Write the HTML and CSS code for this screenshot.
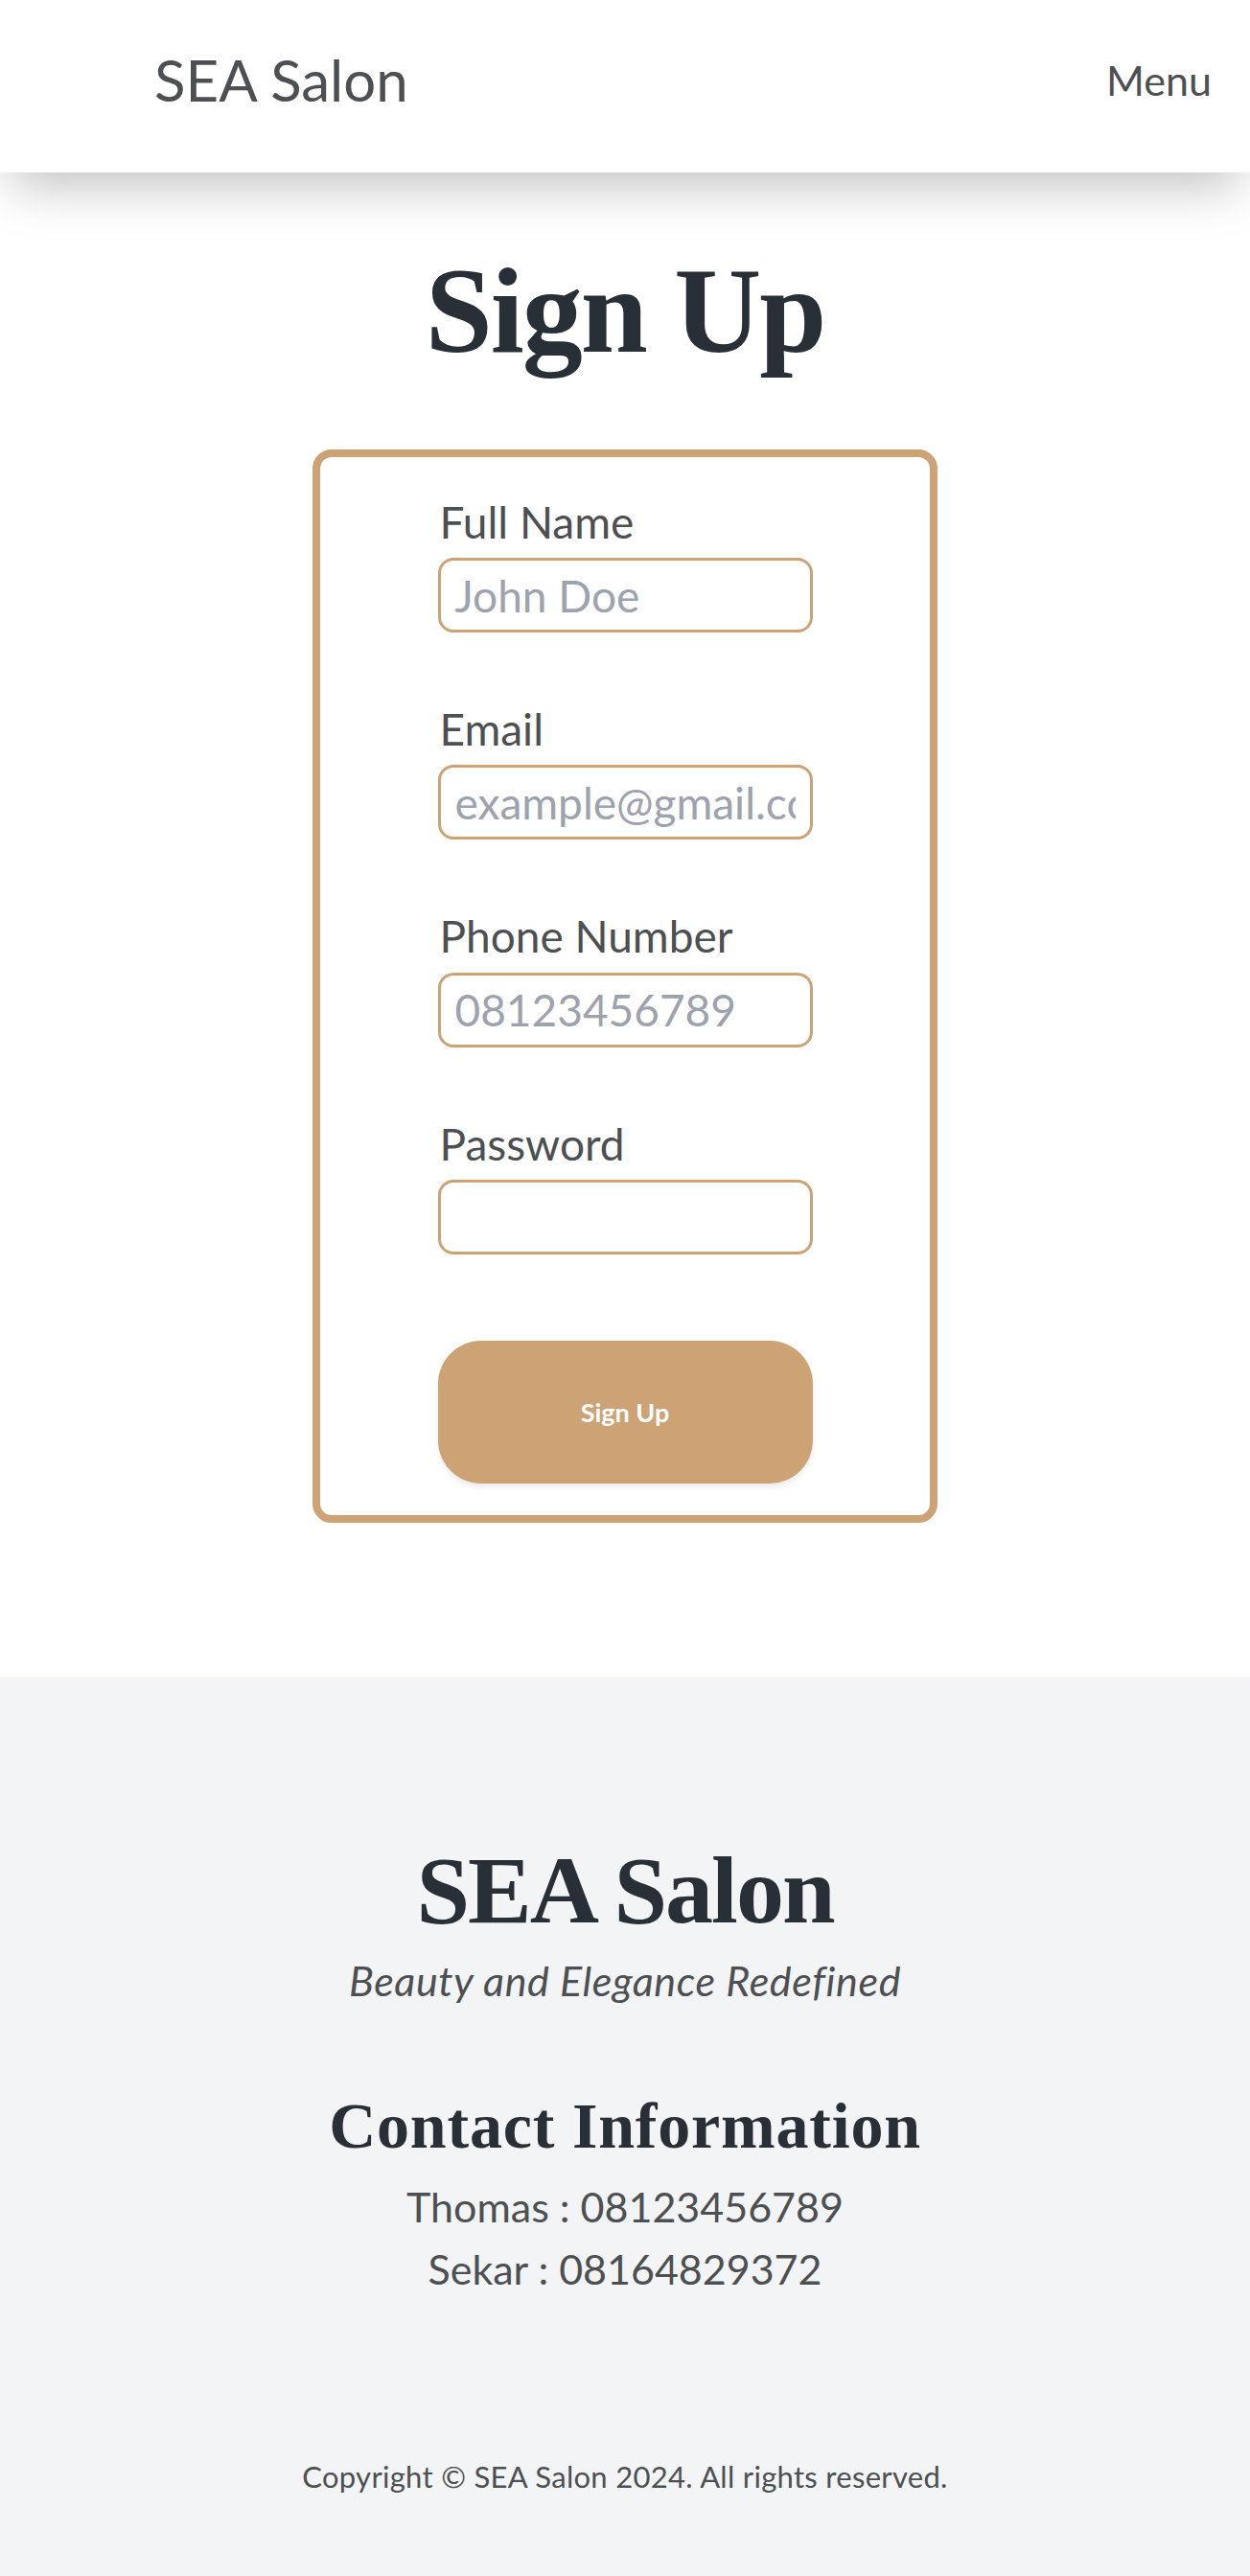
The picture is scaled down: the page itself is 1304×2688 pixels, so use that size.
FILE: index.html
```html
<!DOCTYPE html>
<html lang="en">
<head>
<meta charset="utf-8">
<title>Sign Up - SEA Salon</title>
<link rel="stylesheet" href="styles.css">
</head>
<body>
<header class="site-header">
  <a class="logo" href="#">SEA Salon</a>
  <button class="menu-btn" type="button">Menu</button>
</header>

<main class="page">
  <h1 class="page-title">Sign Up</h1>
  <form class="card">
    <div class="fields">
      <div class="field">
        <label class="field-label" for="name">Full Name</label>
        <input class="field-input" id="name" type="text" placeholder="John Doe">
      </div>
      <div class="field">
        <label class="field-label" for="email">Email</label>
        <input class="field-input" id="email" type="email" placeholder="example@gmail.com">
      </div>
      <div class="field">
        <label class="field-label" for="phone">Phone Number</label>
        <input class="field-input" id="phone" type="tel" placeholder="08123456789">
      </div>
      <div class="field field-last">
        <label class="field-label" for="password">Password</label>
        <input class="field-input" id="password" type="password">
      </div>
      <button class="submit-btn" type="button">Sign Up</button>
    </div>
  </form>
</main>

<footer class="site-footer">
  <h2 class="footer-brand">SEA Salon</h2>
  <p class="footer-tagline">Beauty and Elegance Redefined</p>
  <h3 class="footer-heading">Contact Information</h3>
  <div class="footer-contacts">
    <p class="footer-contact">Thomas : 08123456789</p>
    <p class="footer-contact">Sekar : 08164829372</p>
  </div>
  <p class="footer-copy">Copyright © SEA Salon 2024. All rights reserved.</p>
</footer>
</body>
</html>
```

FILE: styles.css
```css
* { box-sizing: border-box; }

html, body {
  margin: 0;
  padding: 0;
  background: #ffffff;
  font-family: Lato, "Open Sans", sans-serif;
  color: #4D5053;
}

/* Header */
.site-header {
  position: relative;
  z-index: 2;
  height: 180px;
  display: flex;
  align-items: center;
  justify-content: space-between;
  padding: 0 40px 14px 161px;
  background: #ffffff;
  box-shadow: 0 25px 50px -12px rgba(0, 0, 0, 0.25);
}

.logo {
  font-size: 60px;
  line-height: 1;
  color: #4D5053;
  text-decoration: none;
}

.menu-btn {
  border: 0;
  background: transparent;
  padding: 0;
  font-family: inherit;
  font-size: 43px;
  line-height: 1;
  color: #4D5053;
  cursor: pointer;
}

/* Main */
.page {
  padding: 82px 0 161px;
}

.page-title {
  margin: 0 0 81px;
  text-align: center;
  font-family: "Liberation Serif", "DejaVu Serif", serif;
  font-weight: 700;
  font-size: 126px;
  line-height: 1;
  letter-spacing: -2px;
  color: #292F36;
}

.card {
  display: block;
  width: 652px;
  margin: 0 auto;
  border: 8px solid #CDA274;
  border-radius: 20px;
  padding: 40px 0 33px;
}

.fields {
  width: 391px;
  margin: 0 auto;
  display: flex;
  flex-direction: column;
}

.field {
  display: flex;
  flex-direction: column;
  margin-bottom: 73px;
}

.field.field-last {
  margin-bottom: 90px;
}

.field-label {
  font-size: 46px;
  line-height: 1.2;
  color: #4D5053;
  margin-bottom: 10px;
  padding-left: 2px;
}

.field-input {
  width: 100%;
  height: 78px;
  border: 3px solid #CDA274;
  border-radius: 16px;
  padding: 0 15px;
  font-family: inherit;
  font-size: 46px;
  color: #4D5053;
  background: #ffffff;
  outline: none;
}

.field-input::placeholder {
  color: #9CA3AF;
  opacity: 1;
}

.submit-btn {
  width: 100%;
  height: 149px;
  border: 0;
  border-radius: 45px;
  background: #CDA274;
  color: #ffffff;
  font-family: inherit;
  font-weight: 700;
  font-size: 27px;
  box-shadow: 0 4px 8px -2px rgba(0, 0, 0, 0.12);
  cursor: pointer;
}

/* Footer */
.site-footer {
  background: #F3F4F6;
  text-align: center;
  padding: 173px 0 88px;
}

.footer-brand {
  margin: 0;
  font-family: "Liberation Serif", "DejaVu Serif", serif;
  font-weight: 700;
  font-size: 100px;
  line-height: 1;
  letter-spacing: -2px;
  color: #292F36;
}

.footer-tagline {
  margin: 18px 0 0;
  font-style: italic;
  font-size: 43px;
  line-height: 1.2;
  letter-spacing: 0.6px;
  color: #4D5053;
}

.footer-heading {
  margin: 92px 0 0;
  font-family: "Liberation Serif", "DejaVu Serif", serif;
  font-weight: 700;
  font-size: 68px;
  line-height: 1;
  letter-spacing: 0.8px;
  color: #292F36;
}

.footer-contacts {
  margin-top: 18px;
}

.footer-contact {
  margin: 0;
  font-size: 43px;
  line-height: 65px;
  color: #4D5053;
}

.footer-copy {
  margin: 166px 0 0;
  font-size: 31px;
  line-height: 1.2;
  letter-spacing: 0.3px;
  color: #4D5053;
}
```
